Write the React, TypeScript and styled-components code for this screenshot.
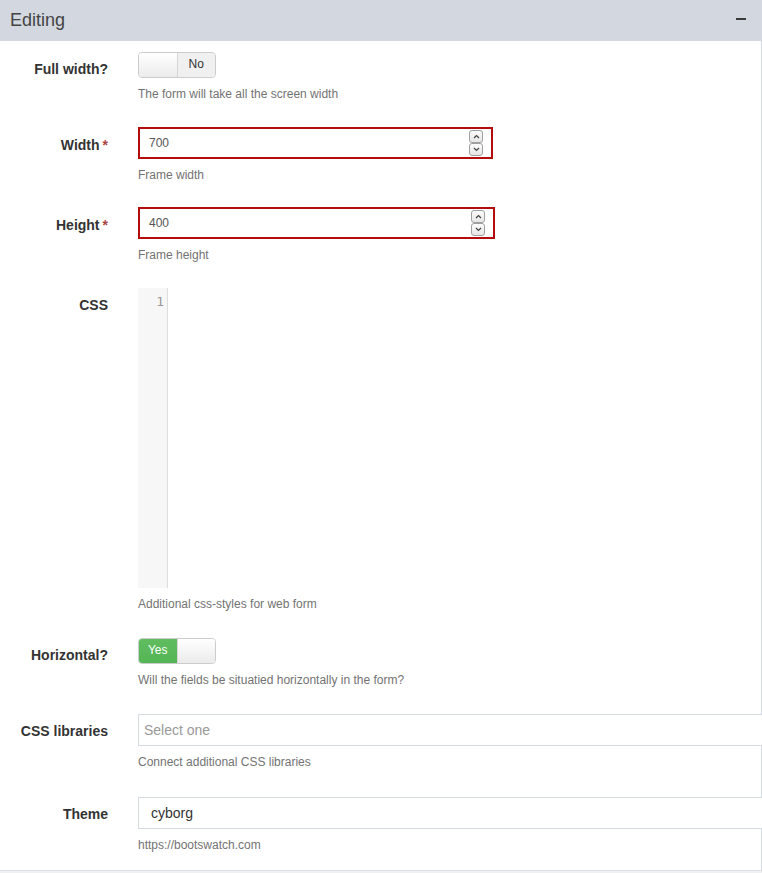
import React from 'react';
import styled, { createGlobalStyle } from 'styled-components';

const Global = createGlobalStyle`
  html, body { margin: 0; padding: 0; }
  body {
    background: #eef0f2;
    font-family: "Liberation Sans", Arial, Helvetica, sans-serif;
    color: #333;
    overflow: hidden;
  }
`;

const Panel = styled.section`
  width: 762px;
  box-sizing: border-box;
  background: #fff;
  border-right: 1px solid #d5dae2;
  border-bottom: 1px solid #dde0e5;
`;

const Header = styled.header`
  height: 41px;
  box-sizing: border-box;
  background: #d3d8e0;
  display: flex;
  align-items: center;
  justify-content: space-between;
  padding: 0 15px 0 10px;
`;

const Title = styled.h3`
  margin: 0;
  font-size: 18px;
  font-weight: 400;
  color: #444;
`;

const Collapse = styled.span`
  display: block;
  width: 10px;
  height: 2px;
  margin-top: -3px;
  background: #3a3a3a;
`;

const Form = styled.form`
  padding: 11px 0 16px;
`;

const Group = styled.div<{ $space?: number }>`
  display: grid;
  grid-template-columns: 108px 1fr;
  column-gap: 30px;
  margin-bottom: ${(p) => (p.$space ?? 24)}px;
  &:last-child { margin-bottom: 0; }
`;

const Label = styled.label<{ $pt?: number }>`
  text-align: right;
  font-size: 14px;
  font-weight: 700;
  line-height: 20px;
  padding-top: ${(p) => (p.$pt ?? 7)}px;
  color: #333;
  white-space: nowrap;
`;

const Req = styled.span`
  color: #a94442;
  margin-left: 3px;
`;

const Control = styled.div`
  display: flex;
  flex-direction: column;
  align-items: flex-start;
  min-width: 0;
`;

const Help = styled.p`
  margin: 8px 0 0;
  font-size: 12px;
  line-height: 17px;
  color: #737373;
`;

const Switch = styled.div`
  display: flex;
  width: 78px;
  height: 26px;
  box-sizing: border-box;
  border: 1px solid #ccc;
  border-radius: 4px;
  overflow: hidden;
  font-size: 12px;
  box-shadow: inset 0 1px 1px rgba(0, 0, 0, 0.05);
`;

const SwitchPart = styled.span<{ $kind: 'handle' | 'off' | 'on' }>`
  flex: 1;
  display: flex;
  align-items: center;
  justify-content: center;
  line-height: 1;
  padding-bottom: 2px;
  background: ${(p) =>
    p.$kind === 'on'
      ? 'linear-gradient(#5fbd5f, #55b555)'
      : p.$kind === 'off'
      ? '#f0f0f0'
      : 'linear-gradient(#ffffff, #ebebeb)'};
  color: ${(p) => (p.$kind === 'on' ? '#fff' : '#333')};
  border-left: ${(p) => (p.$kind === 'off' ? '1px solid #d6d6d6' : 'none')};
  border-right: ${(p) => (p.$kind === 'on' ? '1px solid #d6d6d6' : 'none')};
`;

const NumberField = styled.div<{ $w: number }>`
  width: ${(p) => p.$w}px;
  height: 32px;
  box-sizing: border-box;
  border: 2px solid #b30c0c;
  display: flex;
  align-items: center;
  justify-content: space-between;
  padding: 0 8px 0 9px;
  font-size: 12px;
  color: #555;
  background: #fff;
`;

const Spinner = styled.div`
  display: flex;
  flex-direction: column;
  width: 14px;
`;

const SpinBtn = styled.span`
  display: flex;
  align-items: center;
  justify-content: center;
  height: 13px;
  box-sizing: border-box;
  border: 1px solid #a0a0a0;
  border-radius: 3px;
  background: linear-gradient(#fdfdfd, #e6e6e6);
`;

const Editor = styled.div`
  display: flex;
  width: 100%;
  height: 300px;
  background: #fff;
`;

const Gutter = styled.div`
  width: 29px;
  border-right: 1px solid #ddd;
  background: #f7f7f7;
  box-sizing: content-box;
  text-align: right;
  padding-top: 6px;
  font-family: "DejaVu Sans Mono", "Liberation Mono", monospace;
  font-size: 13px;
  line-height: 16px;
  color: #999;
`;

const LineNo = styled.div`
  padding-right: 3px;
`;

const TextBox = styled.div<{ $pl: number; $muted?: boolean }>`
  width: 640px;
  height: 32px;
  box-sizing: border-box;
  border: 1px solid #d5dae2;
  background: #fff;
  display: flex;
  align-items: center;
  padding-left: ${(p) => p.$pl}px;
  font-size: 14px;
  color: ${(p) => (p.$muted ? '#999' : '#333')};
`;

const Chevron = ({ up }: { up?: boolean }) => (
  <svg width="7" height="5" viewBox="0 0 7 5">
    <polyline
      points={up ? '1,4 3.5,1.5 6,4' : '1,1 3.5,3.5 6,1'}
      fill="none"
      stroke="#444"
      strokeWidth="1.2"
    />
  </svg>
);

const NumberInput = ({ value, w }: { value: string; w: number }) => (
  <NumberField $w={w}>
    <span>{value}</span>
    <Spinner>
      <SpinBtn>
        <Chevron up />
      </SpinBtn>
      <SpinBtn>
        <Chevron />
      </SpinBtn>
    </Spinner>
  </NumberField>
);

export default function App() {
  return (
    <>
      <Global />
      <Panel>
        <Header>
          <Title>Editing</Title>
          <Collapse />
        </Header>
        <Form>
          <Group $space={24}>
            <Label>Full width?</Label>
            <Control>
              <Switch>
                <SwitchPart $kind="handle" />
                <SwitchPart $kind="off">No</SwitchPart>
              </Switch>
              <Help>The form will take all the screen width</Help>
            </Control>
          </Group>
          <Group $space={23}>
            <Label $pt={8}>
              Width<Req>*</Req>
            </Label>
            <Control>
              <NumberInput value="700" w={355} />
              <Help>Frame width</Help>
            </Control>
          </Group>
          <Group $space={24}>
            <Label $pt={8}>
              Height<Req>*</Req>
            </Label>
            <Control>
              <NumberInput value="400" w={357} />
              <Help>Frame height</Help>
            </Control>
          </Group>
          <Group $space={25}>
            <Label>CSS</Label>
            <Control>
              <Editor>
                <Gutter>
                  <LineNo>1</LineNo>
                </Gutter>
              </Editor>
              <Help>Additional css-styles for web form</Help>
            </Control>
          </Group>
          <Group $space={25}>
            <Label>Horizontal?</Label>
            <Control>
              <Switch>
                <SwitchPart $kind="on">Yes</SwitchPart>
                <SwitchPart $kind="handle" />
              </Switch>
              <Help>Will the fields be situatied horizontally in the form?</Help>
            </Control>
          </Group>
          <Group $space={26}>
            <Label>CSS libraries</Label>
            <Control>
              <TextBox $pl={5} $muted>
                Select one
              </TextBox>
              <Help>Connect additional CSS libraries</Help>
            </Control>
          </Group>
          <Group>
            <Label>Theme</Label>
            <Control>
              <TextBox $pl={12}>cyborg</TextBox>
              <Help>https://bootswatch.com</Help>
            </Control>
          </Group>
        </Form>
      </Panel>
    </>
  );
}
